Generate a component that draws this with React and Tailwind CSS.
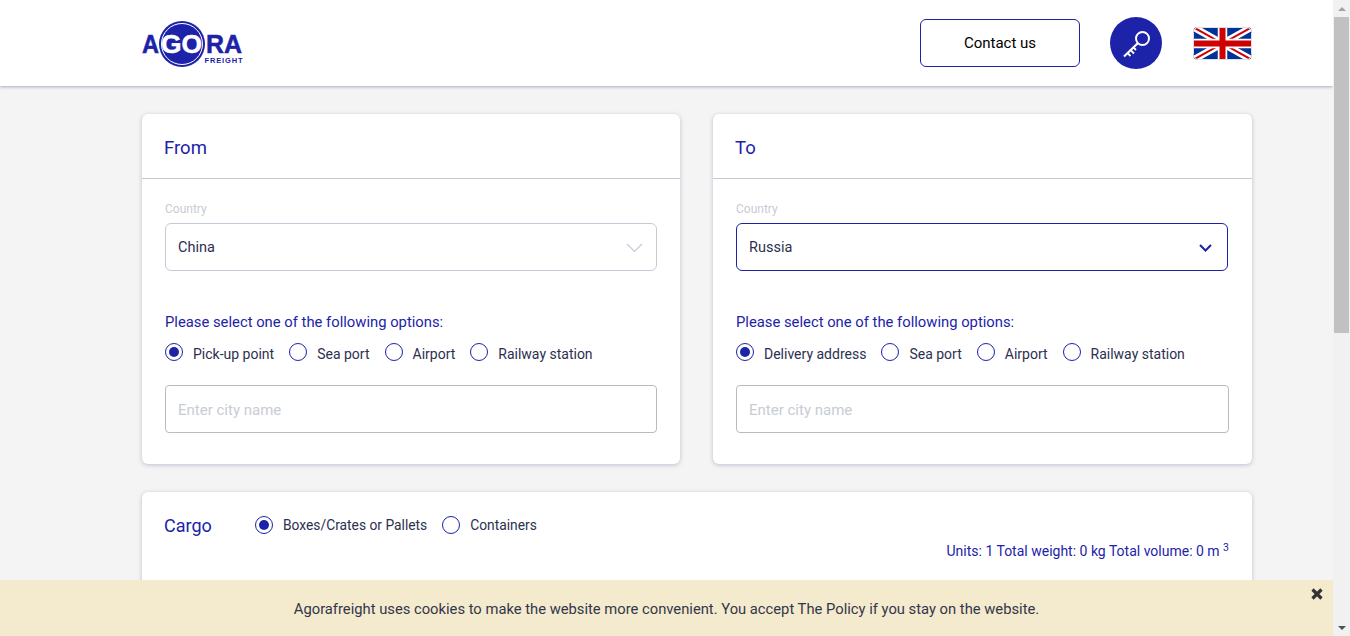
import React from "react";

const Radio = ({ label, checked, flat }) => (
  <label className="flex items-center">
    <span className="w-[18px] h-[18px] rounded-full border border-[#1c23a8] flex items-center justify-center shrink-0 bg-white">
      {checked && <span className="w-[10px] h-[10px] rounded-full bg-[#1c23a8]" />}
    </span>
    <span
      className={
        flat
          ? "ml-[10px] text-[13.8px] leading-[20px] text-[#2c3050] whitespace-nowrap"
          : "ml-[10px] text-[14px] leading-[20px] relative top-[2px] text-[#2c3050] whitespace-nowrap"
      }
    >
      {label}
    </span>
  </label>
);

const Chevron = ({ active }) =>
  active ? (
    <svg width="13" height="8" viewBox="0 0 13 8" fill="none" stroke="#1c23a8" strokeWidth="2" className="mr-[1px]">
      <path d="M1 1l5.5 5.5L12 1" />
    </svg>
  ) : (
    <svg width="17" height="10" viewBox="0 0 17 10" fill="none" stroke="#c5cad6" strokeWidth="1.2" className="-mr-[1px]">
      <path d="M1 1l7.5 7.5L16 1" />
    </svg>
  );

const LocationCard = ({ title, country, active, options, wide }) => (
  <div className={wide ? "w-[539px] h-[350px] bg-white rounded-md shadow-[0_1px_4px_rgba(120,125,160,0.45)]" : "w-[538px] h-[350px] bg-white rounded-md shadow-[0_1px_4px_rgba(120,125,160,0.45)]"}>
    <div className="h-[65px] px-[22px] pt-[5px] flex items-center border-b border-[#c5cad6]">
      <h2 className="text-[18.5px] text-[#1c23a8]">{title}</h2>
    </div>
    <div className="px-[23px] pt-[22px]">
      <div className="text-[12px] leading-[16px] text-[#c8ccd4] mb-[6px]">Country</div>
      <div
        className={
          active
            ? "w-[492px] h-[48px] rounded-md border border-[#1c23a8] flex items-center justify-between pl-[12px] pr-[14px] pt-[2px] text-[14.5px] text-[#2c3050]"
            : "w-[492px] h-[48px] rounded-md border border-[#c5cad6] flex items-center justify-between pl-[12px] pr-[14px] pt-[2px] text-[14.5px] text-[#2c3050]"
        }
      >
        <span>{country}</span>
        <Chevron active={active} />
      </div>
      <div className="mt-[41px] text-[14.8px] leading-[20px] text-[#1c23a8]">
        Please select one of the following options:
      </div>
      <div className="mt-[10px] flex items-center gap-[15px]">
        {options.map((o, i) => (
          <Radio key={o} label={o} checked={i === 0} />
        ))}
      </div>
      <input
        placeholder="Enter city name"
        className="block mt-[23px] w-full h-[48px] rounded border border-[#bbbbbb] px-[12px] pt-[2px] text-[15px] placeholder:text-[#c8ccd4] outline-none"
      />
    </div>
  </div>
);

const Logo = () => (
  <svg width="102" height="48" viewBox="0 0 102 48" fontFamily="'Liberation Sans', sans-serif" fontWeight="700">
    <circle cx="40" cy="25" r="23" fill="#1c23a8" />
    <circle cx="40" cy="25" r="20.5" fill="none" stroke="#fff" strokeWidth="1" />
    <text x="0" y="33.5" fontSize="26" fill="#1c23a8" stroke="#1c23a8" strokeWidth="0.5" textLength="17" lengthAdjust="spacingAndGlyphs">A</text>
    <text x="19" y="33.5" fontSize="26" fill="#fff" stroke="#fff" strokeWidth="0.5" textLength="41" lengthAdjust="spacingAndGlyphs">GO</text>
    <text x="64" y="33.5" fontSize="26" fill="#1c23a8" stroke="#1c23a8" strokeWidth="0.5" textLength="36" lengthAdjust="spacingAndGlyphs">RA</text>
    <text x="62.5" y="44" fontSize="7.5" fill="#1c23a8" textLength="38">FREIGHT</text>
  </svg>
);

const KeyIcon = () => (
  <svg width="52" height="52" viewBox="0 0 52 52" fill="none" stroke="#fff">
    <circle cx="26" cy="26" r="26" fill="#1c23a8" stroke="none" />
    <circle cx="32.5" cy="21.5" r="6.5" strokeWidth="2" />
    <path d="M28 26L14 39.5" strokeWidth="2.2" />
    <path d="M17.5 36l3 3M20.5 33l3.5 3.5M23.5 30.5l2.5 2.5" strokeWidth="1.8" />
  </svg>
);

const Flag = () => (
  <svg width="59" height="33" viewBox="0 0 59 33">
    <defs>
      <clipPath id="flag-clip">
        <rect width="59" height="33" rx="5" />
      </clipPath>
    </defs>
    <g clipPath="url(#flag-clip)">
      <rect width="59" height="33" fill="#00339a" />
      <path d="M0 0L59 33M59 0L0 33" stroke="#fff" strokeWidth="7" />
      <path d="M0 0L29.5 16.5M59 33L29.5 16.5M59 0L29.5 16.5M0 33L29.5 16.5" stroke="#cf0000" strokeWidth="2" />
      <path d="M29.5 0V33M0 16.5H59" stroke="#fff" strokeWidth="9.5" />
      <path d="M29.5 0V33M0 16.5H59" stroke="#cf0000" strokeWidth="6" />
    </g>
    <rect x="0.5" y="0.5" width="58" height="32" rx="5" fill="none" stroke="#dfe1e8" strokeWidth="1" />
  </svg>
);

const App = () => {
  return (
    <div className="h-[636px] flex overflow-hidden font-['Roboto',sans-serif]">
      <div className="relative flex-1 bg-[#f4f4f4] overflow-hidden">
        {/* Header */}
        <header className="h-[86px] bg-white shadow-[0_1px_3px_rgba(120,125,160,0.6)] pl-[142px] pr-[81px] flex items-center justify-between">
          <Logo />
          <div className="flex items-center">
            <button className="w-[160px] h-[48px] rounded-md border border-[#1c23a8] pt-[1px] text-[15px] text-black bg-white">
              Contact us
            </button>
            <div className="ml-[30px]">
              <KeyIcon />
            </div>
            <div className="ml-[31px]">
              <Flag />
            </div>
          </div>
        </header>

        {/* Cards */}
        <div className="ml-[142px] w-[1110px] pt-[28px]">
          <div className="flex justify-between">
            <LocationCard
              title="From"
              country="China"
              options={["Pick-up point", "Sea port", "Airport", "Railway station"]}
            />
            <LocationCard
              title="To"
              country="Russia"
              active
              wide
              options={["Delivery address", "Sea port", "Airport", "Railway station"]}
            />
          </div>

          <div className="mt-[28px] h-[200px] bg-white rounded-md shadow-[0_1px_4px_rgba(120,125,160,0.45)] px-[22px] pt-[19px]">
            <div className="flex items-center">
              <h2 className="w-[91px] text-[18px] leading-[28px] relative top-[1px] text-[#1c23a8]">Cargo</h2>
              <div className="flex items-center gap-[15px]">
                <Radio label="Boxes/Crates or Pallets" checked flat />
                <Radio label="Containers" flat />
              </div>
            </div>
            <div className="text-right text-[14px] text-[#1c23a8] mt-[2px] mr-[1px]">
              Units: 1 Total weight: 0 kg Total volume: 0 m <sup>3</sup>
            </div>
          </div>
        </div>

        {/* Cookie notice */}
        <div className="absolute left-0 right-0 bottom-0 h-[56px] pt-[2px] bg-[#f4eacd] flex items-center justify-center text-[14.75px] text-[#33364a]">
          Agorafreight uses cookies to make the website more convenient. You accept The Policy if you stay on the website.
          <svg className="absolute right-[10px] top-[8px]" width="12" height="12" viewBox="0 0 12 12" stroke="#333" strokeWidth="3.2">
            <path d="M1.5 1.5l9 9M10.5 1.5l-9 9" />
          </svg>
        </div>
      </div>

      {/* Scrollbar */}
      <div className="w-[17px] bg-[#f1f1f1] flex flex-col items-center">
        <div className="h-[17px] flex items-center justify-center">
          <span className="w-0 h-0 border-x-[4px] border-x-transparent border-b-[4px] border-b-[#a3a3a3]" />
        </div>
        <div className="w-[15px] h-[316px] bg-[#c1c1c1]" />
        <div className="flex-1" />
        <div className="h-[17px] flex items-center justify-center">
          <span className="w-0 h-0 border-x-[4px] border-x-transparent border-t-[4px] border-t-[#505050]" />
        </div>
      </div>
    </div>
  );
};

export default App;
